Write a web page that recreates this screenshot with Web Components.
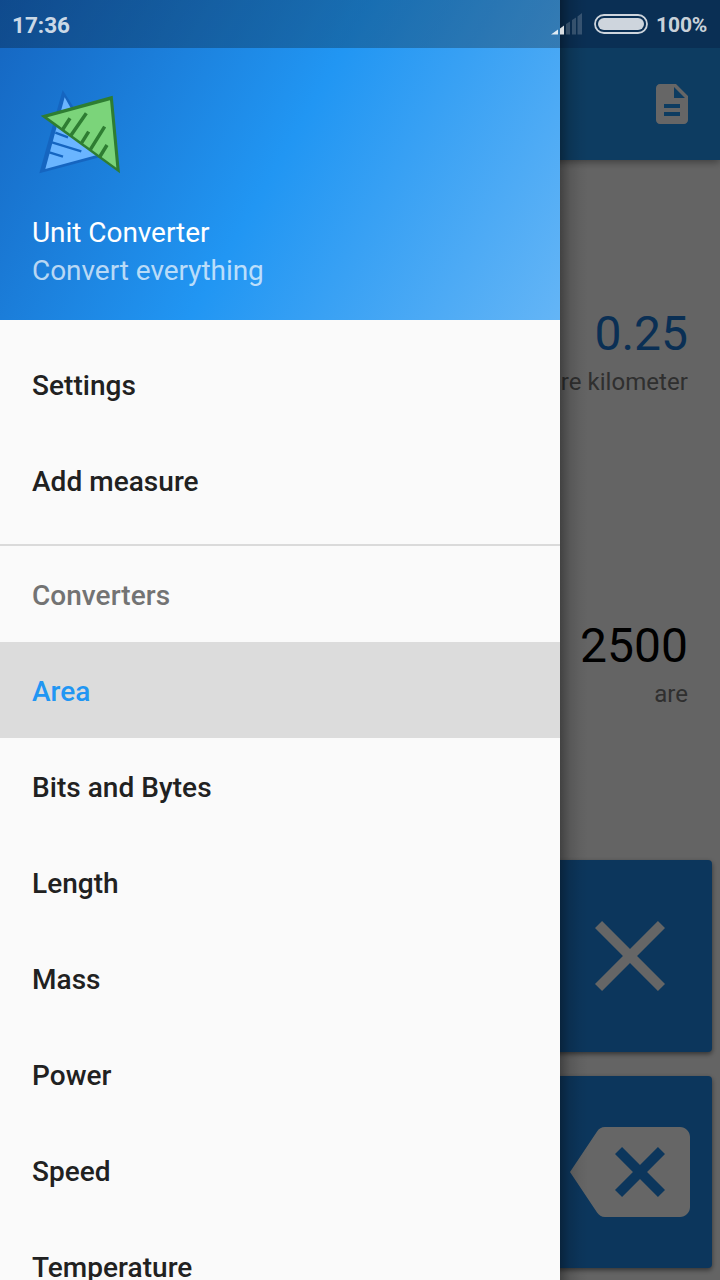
<!DOCTYPE html>
<html lang="en">
<head>
<meta charset="utf-8">
<title>Unit Converter</title>
<style>
html,body{margin:0;height:100%;overflow:hidden}
body{font-family:Roboto,"Noto Sans",sans-serif;background:#fafafa}
</style>
</head>
<body>
<unit-app></unit-app>
<script>
const define = (name, html) => customElements.define(name, class extends HTMLElement {
  constructor() {
    super();
    const t = document.createElement('template');
    t.innerHTML = html;
    this.attachShadow({mode: 'open'}).append(t.content.cloneNode(true));
  }
});

define('app-toolbar', `<style>
:host{display:flex;box-sizing:border-box;height:160px;padding:48px 24px 0;align-items:center;justify-content:flex-end;
background:linear-gradient(#1976d2 48px,#2196f3 48px);box-shadow:0 2px 8px rgba(0,0,0,.4);position:relative}
svg{width:48px;height:48px;display:block;fill:#fff}
</style><svg viewBox="0 0 24 24"><path d="M14 2H6c-1.1 0-1.99.9-1.99 2L4 20c0 1.1.89 2 1.99 2H18c1.1 0 2-.9 2-2V8l-6-6zm2 16H8v-2h8v2zm0-4H8v-2h8v2zm-3-5V3.5L18.5 9H13z"/></svg>`);

define('unit-value', `<style>
:host{display:flex;flex-direction:column;justify-content:center;align-items:flex-end;box-sizing:border-box;height:312px;padding:69px 32px 0;font-size:48px;line-height:56px;white-space:nowrap}
div{font-size:24px;line-height:28px;color:#757575;margin-top:6px;letter-spacing:.06px}
</style><span><slot></slot></span><div><slot name="unit"></slot></div>`);

define('key-button', `<style>
:host{display:flex;align-items:center;justify-content:center;width:164px;height:192px;border-radius:4px;background:#1e88e5;box-shadow:0 2px 5px rgba(0,0,0,.5)}
</style><slot></slot>`);

define('converter-screen', `<style>
:host{display:flex;flex-direction:column;height:1280px;background:#fafafa}
.keys{display:flex;flex-direction:column;align-items:flex-end;gap:24px;padding:76px 8px 0}
svg{width:120px;height:120px;display:block;fill:#fff}
</style>
<app-toolbar></app-toolbar>
<unit-value style="color:#1976d2">0.25<span slot="unit">square kilometer</span></unit-value>
<unit-value style="color:#000">2500<span slot="unit">are</span></unit-value>
<div class="keys">
<key-button><svg viewBox="0 0 24 24"><path d="M19 6.41L17.59 5 12 10.59 6.41 5 5 6.41 10.59 12 5 17.59 6.41 19 12 13.41 17.59 19 19 17.59 13.41 12z"/></svg></key-button>
<key-button><svg viewBox="0 0 24 24"><path d="M22 3H7c-.69 0-1.23.35-1.59.88L0 12l5.41 8.11c.36.53.9.89 1.59.89h15c1.1 0 2-.9 2-2V5c0-1.1-.9-2-2-2zm-3 12.59L17.59 17 14 13.41 10.41 17 9 15.59 12.59 12 9 8.41 10.41 7 14 10.59 17.59 7 19 8.41 15.41 12 19 15.59z"/></svg></key-button>
</div>`);

define('drawer-header', `<style>
:host{display:block;box-sizing:border-box;height:320px;padding:80px 30px 0;font-size:28px;line-height:38px;color:#fff;
background:linear-gradient(rgba(0,0,0,.267) 48px,transparent 48px),linear-gradient(119.75deg,#1565c0,#2196f3 50%,#64b5f6)}
svg{display:block;width:100px;height:100px;margin-bottom:34px}
div{padding-left:2px;letter-spacing:-.05px}.sub{color:rgba(255,255,255,.7)}
</style>
<svg viewBox="0 0 300 300">
<path d="M98 30L28 280l195-52z" fill="#1565c0"/>
<path d="M104 52L46 267l155-42z" fill="#6ab5ff"/>
<path d="M76 158l38 14M66 187l88 27M58 217l41 13" fill="none" stroke="#1565c0" stroke-width="7"/>
<path d="M32 107L248 47l22 233z" fill="#2e7d32"/>
<path d="M52 112L240 61l19 202z" fill="#7bd47a"/>
<path d="M97 150l23-35M121 169l48-69M154 190l22-35M181 209l43-69M209 231l22-36" fill="none" stroke="#2e7d32" stroke-width="10.500"/>
</svg>
<div><slot></slot></div><div class="sub"><slot name="subtitle"></slot></div>`);

define('drawer-item', `<style>
:host{display:flex;box-sizing:border-box;align-items:center;height:96px;padding:4px 32px 0;font-size:28px;line-height:34px;font-weight:500;letter-spacing:.04px;color:#212121}
:host([heading]){color:#737373}
:host([selected]){background:#dcdcdc;color:#2196f3}
</style><slot></slot>`);

define('nav-drawer', `<style>
:host{display:block;width:560px;height:1280px;overflow:hidden;background:#fafafa}
nav{padding-top:16px}
hr{border:0;height:2px;margin:16px 0 0;background:#dadada}
</style>
<drawer-header>Unit Converter<span slot="subtitle">Convert everything</span></drawer-header>
<nav><drawer-item>Settings</drawer-item><drawer-item>Add measure</drawer-item><hr>
<drawer-item heading>Converters</drawer-item><drawer-item selected>Area</drawer-item><drawer-item>Bits and Bytes</drawer-item><drawer-item>Length</drawer-item><drawer-item>Mass</drawer-item><drawer-item>Power</drawer-item><drawer-item>Speed</drawer-item><drawer-item>Temperature</drawer-item></nav>`);

define('status-bar', `<style>
:host{display:flex;box-sizing:border-box;height:48px;padding:2px 13px 0 12px;align-items:center;font-size:22.5px;line-height:26px;font-weight:700;color:rgba(255,255,255,.8)}
.time{flex:1;padding-bottom:1px}
svg{display:block;width:98px;height:24px;margin-right:8px}
.pct{font-size:21px;width:51px;white-space:nowrap;letter-spacing:-.1px}
</style><span class="time"><slot name="time"></slot></span>
<svg viewBox="550 13 98 24" fill="#fff"><g opacity=".85"><path d="M551 34.500l7-5v5zM560 28.5l4-3v9h-4z"/></g>
<path opacity=".18" d="M566 24l4-2.500v13h-4zM572 20l4-2.500v17h-4zM577.500 16.500l4.500-3.500v21.500h-4.500z"/>
<rect x="595" y="15" width="52" height="18" rx="9" fill="none" stroke="#fff" stroke-width="1.800" opacity=".8"/>
<rect x="598" y="18" width="46" height="12" rx="6" opacity=".8"/></svg>
<span class="pct"><slot name="battery"></slot></span>`);

define('unit-app', `<style>
:host{display:block;position:relative;width:720px;height:1280px;overflow:hidden}
.scrim{position:absolute;inset:0;background:rgba(0,0,0,.6)}
nav-drawer{position:absolute;left:0;top:0}
.shade{position:absolute;left:560px;top:0;width:28px;height:1280px;background:linear-gradient(90deg,rgba(0,0,0,.34),rgba(0,0,0,.13) 35%,rgba(0,0,0,.04) 70%,transparent)}
status-bar{position:absolute;left:0;top:0;width:720px}
</style>
<converter-screen></converter-screen>
<div class="scrim"></div><div class="shade"></div>
<nav-drawer></nav-drawer>
<status-bar><span slot="time">17:36</span><span slot="battery">100%</span></status-bar>`);
</script>
</body>
</html>
